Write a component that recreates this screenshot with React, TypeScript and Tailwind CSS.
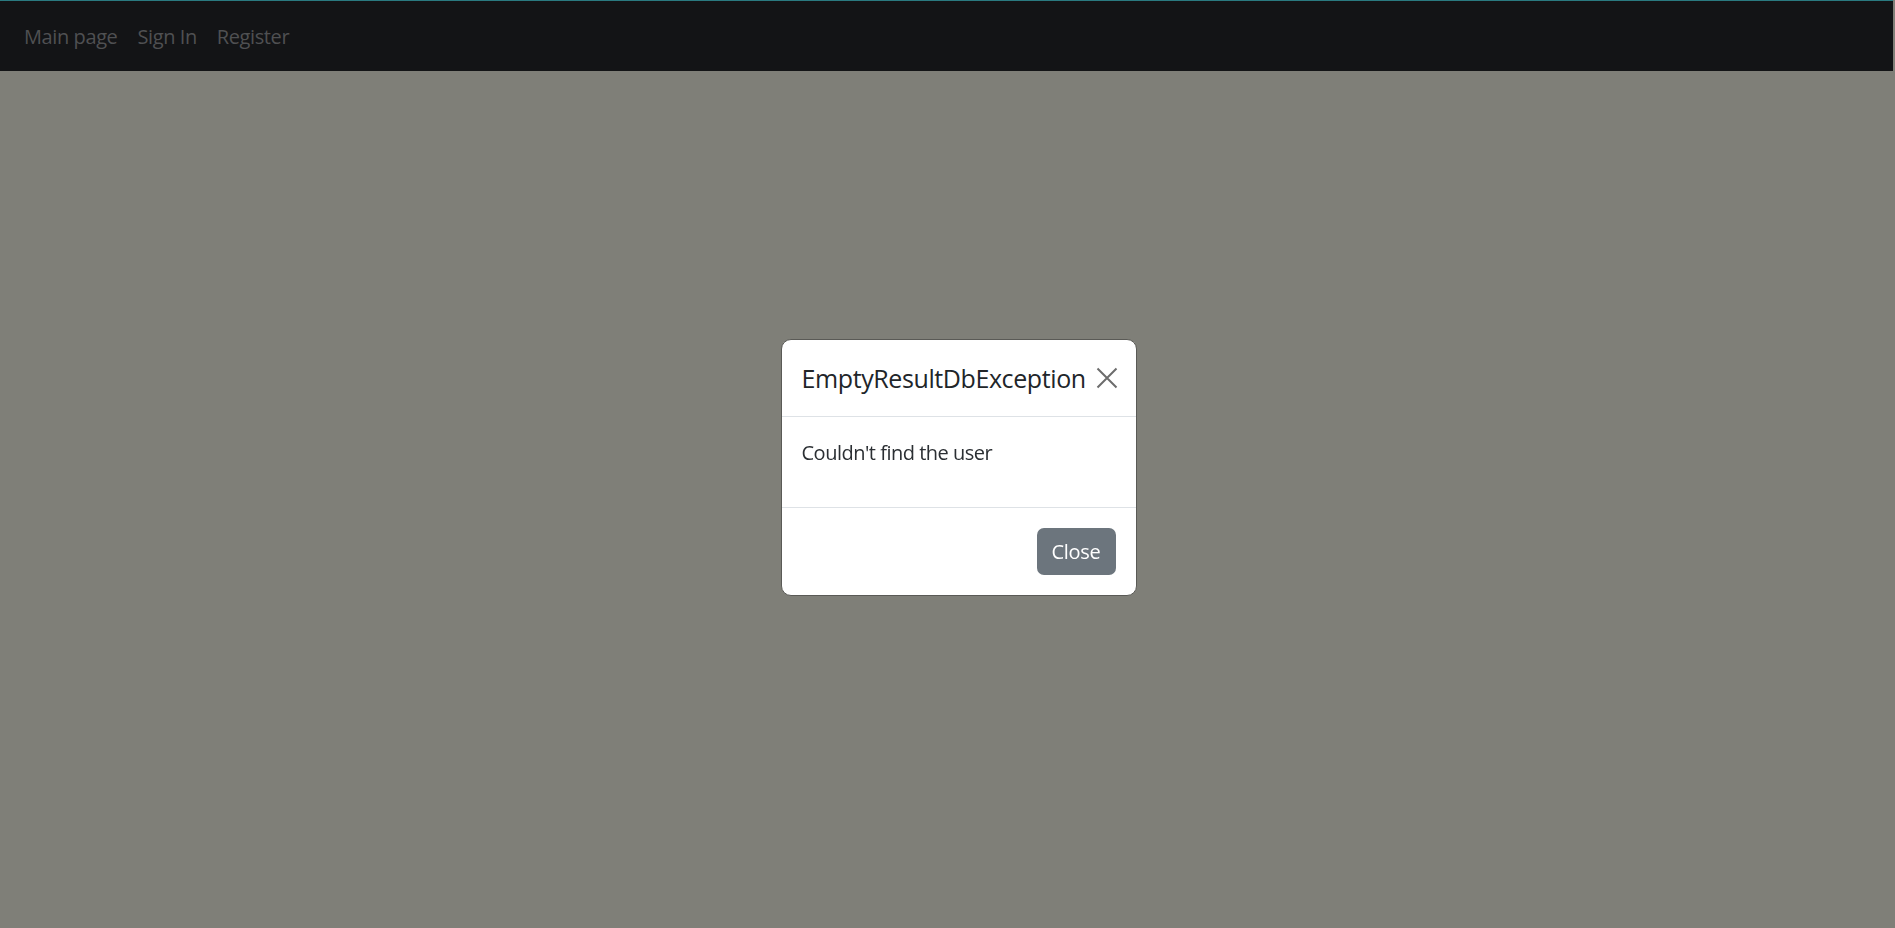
export default function App() {
  const links = ["Main page", "Sign In", "Register"];

  return (
    <div className="h-screen flex flex-col bg-[#7f7f78] font-['Open_Sans',sans-serif] overflow-hidden">
      <nav className="h-[71px] shrink-0 bg-[#131416] border-t border-[#2a7a80] flex items-center px-[14px] pt-[2px] mr-[2px]">
        <ul className="flex items-center">
          {links.map((link) => (
            <li key={link}>
              <a href="#" className="block px-[10px] text-[20px] leading-[30px] text-[#4f5052] tracking-[-0.4px]">
                {link}
              </a>
            </li>
          ))}
        </ul>
      </nav>

      <div className="flex-1" />

      {/* modal */}
      <div className="fixed inset-0 flex items-center justify-center pl-[22px] pt-[6px]">
        <div className="w-[356px] bg-white border border-[#5a5a56] rounded-[10px] flex flex-col">
          <div className="flex items-center justify-between pl-[20px] pr-[18px] h-[77px] border-b border-[#dee2e6]">
            <h5 className="text-[25px] leading-[37px] text-[#212529] tracking-[-0.4px] pt-[2px]">EmptyResultDbException</h5>
            <button className="text-[#6c6c6c]">
              <svg width="22" height="22" viewBox="0 0 22 22" fill="none" stroke="currentColor" strokeWidth="2">
                <path d="M1.5 1.5 20.5 20.5M20.5 1.5 1.5 20.5" />
              </svg>
            </button>
          </div>
          <div className="px-[20px] pt-[21px] pb-[19px] border-b border-[#dee2e6]">
            <p className="text-[20px] leading-[30px] mb-[20px] text-[#2b2f33] tracking-[-0.5px]">Couldn't find the user</p>
          </div>
          <div className="flex justify-end p-[15px]">
            <button className="m-[5px] h-[47px] px-[15px] rounded-[7px] bg-[#6c757d] text-white text-[20px] leading-[30px] tracking-[-0.3px] pt-[1px]">
              Close
            </button>
          </div>
        </div>
      </div>
    </div>
  );
}
